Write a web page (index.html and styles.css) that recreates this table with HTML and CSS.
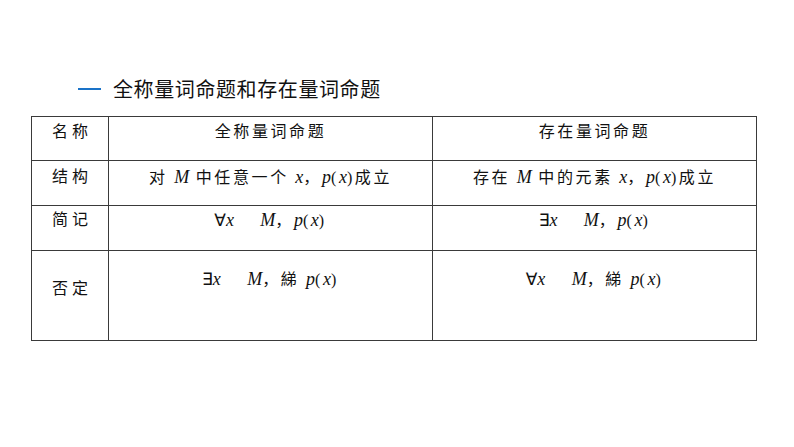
FILE: index.html
```html
<!DOCTYPE html>
<html lang="zh">
<head>
<meta charset="utf-8">
<link rel="stylesheet" href="styles.css">
</head>
<body>
<div class="page">
  <div class="title"><span class="dash"></span><span class="title-text">全称量词命题和存在量词命题</span></div>
  <table class="grid">
    <colgroup><col class="c1"><col class="c2"><col class="c3"></colgroup>
    <tr class="r1">
      <td class="lbl"><span class="ln">名称</span></td>
      <td><span class="ln">全称量词命题</span></td>
      <td><span class="ln">存在量词命题</span></td>
    </tr>
    <tr class="r2">
      <td class="lbl"><span class="ln">结构</span></td>
      <td><span class="ln">对 <i>M</i> 中任意一个 <i>x</i>，<i>p</i>(<i>x</i>)成立</span></td>
      <td><span class="ln">存在 <i>M</i> 中的元素 <i>x</i>，<i>p</i>(<i>x</i>)成立</span></td>
    </tr>
    <tr class="r3">
      <td class="lbl"><span class="ln">简记</span></td>
      <td><span class="ln"><span class="q">∀</span><i>x</i>&nbsp;&nbsp;&nbsp;&nbsp;<i>M</i>，<i>p</i>(<i>x</i>)</span></td>
      <td><span class="ln"><span class="q">∃</span><i>x</i>&nbsp;&nbsp;&nbsp;&nbsp;<i>M</i>，<i>p</i>(<i>x</i>)</span></td>
    </tr>
    <tr class="r4">
      <td class="lbl"><span class="ln">否定</span></td>
      <td><span class="ln"><span class="q">∃</span><i>x</i>&nbsp;&nbsp;&nbsp;&nbsp;<i>M</i>，綈 <i>p</i>(<i>x</i>)</span></td>
      <td><span class="ln"><span class="q">∀</span><i>x</i>&nbsp;&nbsp;&nbsp;&nbsp;<i>M</i>，綈 <i>p</i>(<i>x</i>)</span></td>
    </tr>
  </table>
</div>
</body>
</html>
```

FILE: styles.css
```css
html, body {
  margin: 0;
  padding: 0;
  background: #ffffff;
}
.page {
  width: 794px;
  height: 447px;
  padding: 76px 0 0 31px;
  box-sizing: border-box;
}
.title {
  display: flex;
  align-items: center;
  margin-left: 47px;
  height: 26px;
}
.dash {
  display: block;
  width: 23px;
  height: 2px;
  background: #1a73c8;
  margin-right: 12px;
}
.title-text {
  font-family: "Noto Sans CJK SC", sans-serif;
  font-size: 20px;
  letter-spacing: 0.6px;
  line-height: 26px;
  color: #111;
}
.grid {
  margin-top: 14px;
  border-collapse: collapse;
  table-layout: fixed;
  width: 725px;
  font-family: "Liberation Serif", "Noto Sans CJK SC", serif;
  font-size: 16px;
  color: #111;
}
.c1 { width: 77px; }
.c2 { width: 324px; }
.c3 { width: 324px; }
.grid td {
  border: 1px solid #3a3a3a;
  text-align: center;
  vertical-align: top;
  padding: 0;
  letter-spacing: 2.6px;
  white-space: nowrap;
}
.ln {
  display: block;
  height: 20px;
  line-height: 20px;
  overflow: visible;
}
.grid td.lbl {
  letter-spacing: 4px;
  padding-left: 4px;
}
.grid i {
  font-family: "Liberation Serif", serif;
  font-style: italic;
  font-size: 18px;
  letter-spacing: 0;
  line-height: 20px;
}
.q {
  font-family: "DejaVu Sans", sans-serif;
  font-size: 17px;
  font-weight: normal;
  letter-spacing: 0;
  line-height: 20px;
}
.r1 td { height: 43px; }
.r1 .ln { margin-top: 5px; }
.r2 td { height: 44px; }
.r2 .ln { margin-top: 6px; }
.r3 td { height: 44px; }
.r3 .ln { margin-top: 4px; }
.r4 td { height: 89px; }
.r4 .ln { margin-top: 18px; }
.r4 td.lbl .ln { margin-top: 28px; }
```
